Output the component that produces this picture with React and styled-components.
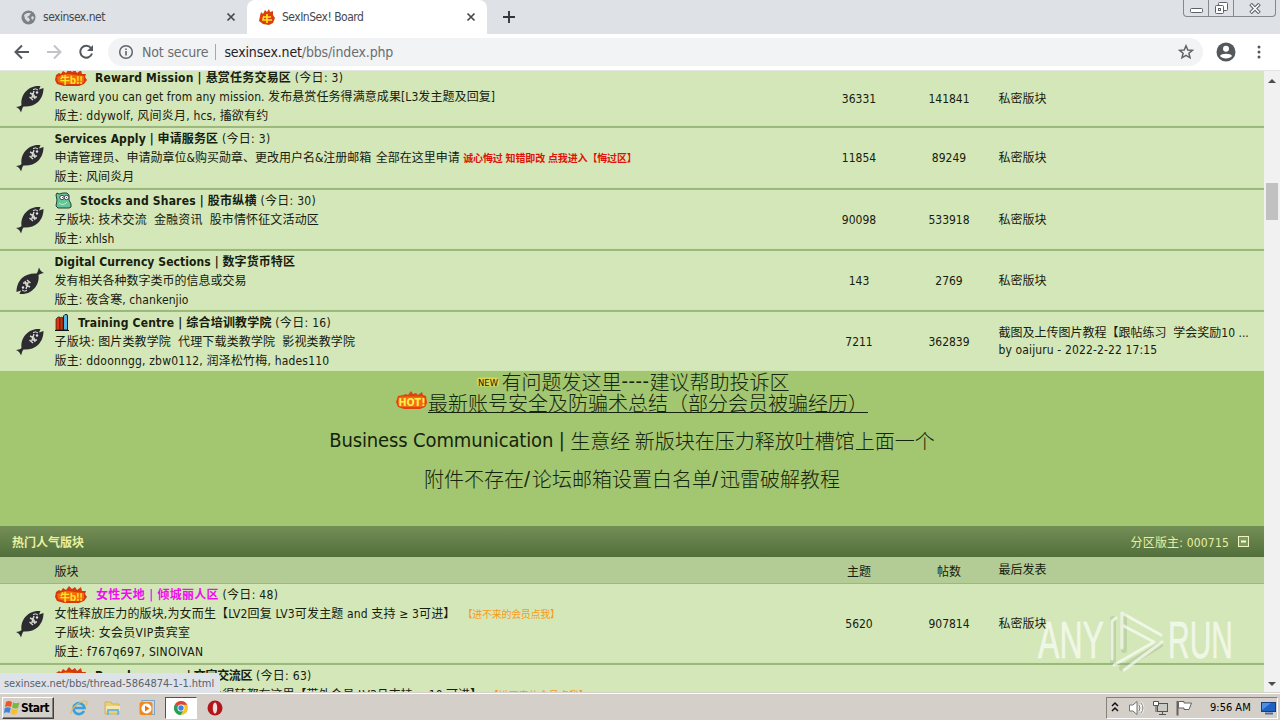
import React from "react";
import styled, { createGlobalStyle, css } from "styled-components";

const GlobalStyle = createGlobalStyle`
  * {
    box-sizing: border-box;
  }

  body {
    margin: 0;
    overflow: hidden;
    font-family: "DejaVu Sans Condensed", "DejaVu Sans", "Noto Sans CJK SC", sans-serif;
    font-stretch: condensed;
    font-size: 12px;
    color: #16200e;
  }

  svg {
    display: block;
    flex: none;
  }
`;

const Screen = styled.div`
  position: relative;
  display: flex;
  flex-direction: column;
  width: 1280px;
  height: 720px;
  overflow: hidden;
  background: white;
`;

/* browser frame */

const TabStrip = styled.div`
  display: flex;
  flex: none;
  height: 34px;
  background: #dee1e6;
`;

const Tab = styled.div`
  display: flex;
  align-items: center;
  width: ${(p) => p.$width}px;
  height: 34px;
  padding: 0 11px 0 ${(p) => p.$left}px;
  color: #45494d;
  border-radius: 8px 8px 0 0;
  background: ${(p) => (p.$active ? "white" : "transparent")};
`;

const TabTitle = styled.span`
  flex: 1;
  margin-left: 7px;
  font-size: 12px;
  letter-spacing: ${(p) => p.$ls || 0}px;
  white-space: nowrap;
`;

const NewTab = styled.div`
  display: flex;
  align-items: center;
  padding-left: 15px;
`;

const WindowButtons = styled.div`
  display: flex;
  height: 17px;
  margin-left: auto;
  margin-right: 4px;
  border: 1px solid #85888f;
  border-top: none;
  border-radius: 0 0 4px 4px;
`;

const WindowButton = styled.div`
  display: flex;
  justify-content: center;
  align-items: center;
  width: ${(p) => p.$width}px;

  & + & {
    border-left: 1px solid #85888f;
  }
`;

const Toolbar = styled.div`
  display: flex;
  align-items: center;
  flex: none;
  height: 37px;
  padding: 0 13px 1px 14px;
  border-bottom: 1px solid #e3e6e3;
  background: white;
`;

const NavButtons = styled.div`
  display: flex;
  gap: 16px;
  width: 94px;
`;

const AddressBar = styled.div`
  display: flex;
  align-items: center;
  flex: none;
  width: 1095px;
  height: 28px;
  padding: 0 9px 0 10px;
  border-radius: 14px;
  background: #f1f3f4;
  color: #6a6e72;
  font-size: 14px;
`;

const NotSecure = styled.span`
  margin-left: 8px;
  padding-right: 7px;
  border-right: 1px solid #a5a9ad;
  line-height: 16px;
  white-space: nowrap;
  letter-spacing: ${(p) => p.$ls}px;
`;

const Url = styled.span`
  flex: 1;
  margin-left: 8px;
  white-space: nowrap;
  letter-spacing: ${(p) => p.$ls}px;

  b {
    font-weight: normal;
    color: #1f2226;
  }
`;

const ToolbarRight = styled.div`
  display: flex;
  align-items: center;
  justify-content: space-between;
  flex: 1;
  margin-left: 13px;
`;

/* page */

const Viewport = styled.div`
  display: flex;
  flex: none;
  height: 621px;
`;

const Page = styled.main`
  width: 1264px;
  overflow: hidden;
  background: #a3c671;
`;

const Scrollbar = styled.div`
  display: flex;
  flex-direction: column;
  align-items: center;
  width: 16px;
  padding: 8px 0 6px;
  background: #f1f1f1;
`;

const Thumb = styled.div`
  width: 12px;
  height: 37px;
  margin: 100px 0 auto;
  background: #c1c1c1;
`;

const columns = css`
  display: grid;
  grid-template-columns: 54.5px 759.5px 90px 90px 1fr;
  align-items: center;
`;

const ForumRow = styled.div`
  ${columns}
  height: ${(p) => p.$height}px;
  padding-bottom: ${(p) => (p.$clipped ? 5 : 0)}px;
  border-bottom: ${(p) => (p.$last ? "none" : "2px solid #9cb97c")};
  background: #d4e7b9;
  box-shadow: inset 0 -1px #cfe6b4;
`;

const FishCell = styled.div`
  padding-left: 15px;

  svg {
    transform: ${(p) => (p.$old ? "rotate(180deg)" : "none")};
  }
`;

const Info = styled.div`
  align-self: ${(p) => (p.$clipped ? "start" : "center")};
  margin-top: ${(p) => (p.$clipped ? -2 : 0)}px;
  padding-top: ${(p) => (p.$clipped ? 0 : 1)}px;
`;

const Line = styled.div`
  display: flex;
  align-items: center;
  height: 19px;
  line-height: 19px;
  white-space: pre;
`;

const Run = styled.span`
  font-size: ${(p) => p.$size || 12}px;
  font-weight: ${(p) => (p.$bold ? "bold" : "normal")};
  color: ${(p) => p.$color || "inherit"};
  letter-spacing: ${(p) => p.$ls || 0}px;
`;

const BadgeBox = styled.span`
  width: ${(p) => p.$width}px;
  margin-top: -2px;
`;

const Count = styled.div`
  text-align: center;
`;

const LastPost = styled.div`
  padding: 1px 0 0 4.5px;
  line-height: 17px;
  white-space: pre;
`;

const Announcement = styled.div`
  display: flex;
  flex-direction: column;
  align-items: center;
  height: 155px;
  font-size: 20px;
  line-height: 21px;
  color: #15240c;
`;

const Notice = styled.div`
  display: flex;
  align-items: center;
  height: 21px;
  margin-bottom: ${(p) => p.$gap || 0}px;
  white-space: pre;
`;

const BigText = styled.span`
  font-family: "Noto Sans CJK SC Light", "Noto Sans CJK SC", sans-serif;
  font-weight: 300;
`;

const Underlined = styled(BigText)`
  height: 20px;
  line-height: 20px;
  border-bottom: 1px solid #15240c;
`;

const CategoryBar = styled.div`
  display: flex;
  align-items: center;
  justify-content: space-between;
  height: 31px;
  padding: 0 15px 0 12px;
  color: #e9f0a0;
  background: linear-gradient(#748f56, #526e3b);
`;

const Moderator = styled.span`
  display: flex;
  align-items: center;
  gap: 9px;
  letter-spacing: ${(p) => p.$ls || 0}px;
`;

const ColumnHeads = styled.div`
  ${columns}
  height: 27px;
  border-bottom: 1px solid #9cb97c;
  background: #b3cb95;
`;

const StatusBubble = styled.div`
  position: absolute;
  left: 0;
  top: 673px;
  width: 220px;
  height: 20px;
  padding: 1px 0 0 4px;
  border-top-right-radius: 4px;
  background: #dee3ea;
  color: #5c6166;
  font-size: 11px;
  line-height: 20px;
  letter-spacing: ${(p) => p.$ls}px;
  white-space: nowrap;
`;

const Watermark = styled.div`
  position: absolute;
  left: 1034px;
  top: 606px;
`;

/* taskbar */

const Taskbar = styled.div`
  display: flex;
  align-items: center;
  flex: none;
  height: 28px;
  padding: 2px 2px 0;
  border-top: 1px solid #d5d1cb;
  box-shadow: inset 0 1px #fff;
  background: #d5cfc9;
`;

const StartButton = styled.div`
  display: flex;
  align-items: center;
  gap: 1px;
  width: 52px;
  height: 22px;
  padding-left: 1px;
  border: 1px solid;
  border-color: #fff #404040 #404040 #fff;
  box-shadow: inset -1px -1px #85807a;
  font-size: 12px;
  line-height: 18px;
  font-weight: bold;
  color: #000;
  letter-spacing: ${(p) => p.$ls}px;
`;

const TaskIcon = styled.div`
  display: flex;
  align-items: center;
  justify-content: center;
  width: 32px;
  height: 22px;
  margin-left: 2px;
  border: 1px solid transparent;
  ${(p) =>
    p.$active &&
    css`
      border-color: #55524e #fff #fff #55524e;
      background: white;
    `}
`;

const QuickLaunch = styled.div`
  display: flex;
  margin-left: 7px;
`;

const Tray = styled.div`
  display: flex;
  align-items: center;
  width: 172px;
  height: 22px;
  margin-left: auto;
  padding-left: 4px;
  border: 1px solid;
  border-color: #85807a #fff #fff #85807a;
  color: #000;
`;

const TrayIcons = styled.div`
  display: flex;
  gap: 7px;
  margin-left: 9px;
`;

const Clock = styled.span`
  margin: 0 10px 0 17px;
  font-size: 11px;
  white-space: nowrap;
`;

function Fish() {
  return (
    <svg width="30" height="28" viewBox="0 0 30 28">
      <path
        d="M1 22 C3 21.500 5 21.500 6.500 20 C5.500 13 9 6.500 15 3 C18 1.300 22 .7 25.500 1 L24 4.500 L28.500 3 C28.500 8 27 13 23 17 C19 20.500 14 22 8.500 21.500 C7 23 7 25 6 27.500 C5 25 4 23 1 22 Z"
        fill="#2b2b30"
      />
      <path
        d="M15 8 L19 10 L20 14 M19 6 L17 12 L22 12 M14.500 12 L18 15"
        stroke="#d6dad2"
        strokeWidth="1.400"
        fill="none"
      />
      <path d="M18 4.500 Q21 3 23 5" stroke="#e4e4e4" strokeWidth="1" fill="none" />
      <circle cx="22" cy="7.500" r="1.200" fill="#e4e4e4" />
    </svg>
  );
}

function FlameBadge() {
  return (
    <svg width="32" height="18" viewBox="0 0 32 18">
      <path
        d="M1 6 L4 4 L6 5 L8 2 L11 4 L14 0 L17 3 L20 1 L22 4 L26 1 L27 5 L31 5 L30 8 L32 11 L29 15 L24 17 L9 17 L2 15 L0 11 Z"
        fill="#d63a0c"
      />
      <path d="M2 8 L7 6 L13 5 L20 6 L29 7 L29 13 L23 15 L9 15 L3 13 Z" fill="#f4690a" />
      <text
        x="5"
        y="14.500"
        fontSize="10"
        fontWeight="bold"
        fill="#ffe626"
        fontFamily="Noto Sans CJK SC, sans-serif"
        textLength="23"
      >
        牛b!!
      </text>
    </svg>
  );
}

function MonsterIcon() {
  return (
    <svg width="17" height="17" viewBox="0 0 17 17">
      <path
        d="M1 3 L2 1 L4 2 L8 1 L12 1 L14 3 L14 8 L16 12 L16 15 L14 16 L3 16 L1 14 L2 8 Z"
        fill="#67c698"
        stroke="#1f4436"
      />
      <circle cx="7" cy="5.500" r="2.200" fill="#fff" stroke="#223" strokeWidth=".8" />
      <circle cx="11.500" cy="5.500" r="2.200" fill="#fff" stroke="#223" strokeWidth=".8" />
      <path d="M7 5.500h1M11 5.500h1" stroke="#c22" strokeWidth="1.200" />
      <path d="M4 11 C6 13 10 13 12 10" stroke="#b7f0d2" fill="none" />
    </svg>
  );
}

function BooksIcon() {
  return (
    <svg width="14" height="17" viewBox="0 0 14 17">
      <path d="M1 5 L3 3 L5 3 L5 16 L1 16 Z" fill="#e0330f" stroke="#221" strokeWidth=".7" />
      <path d="M5 4 L7 3 L8 4 L8 16 L5 16 Z" fill="#d92c0c" stroke="#221" strokeWidth=".7" />
      <path d="M8.500 2 L10 .5 L12 .5 L12.500 2 L12.500 16 L8.500 16 Z" fill="#55b4e6" stroke="#123" />
      <path d="M0 16.500 H14" stroke="#111" />
    </svg>
  );
}

function HotBadge() {
  return (
    <svg width="32" height="24" viewBox="0 0 32 24">
      <path
        d="M2 5 L7 4 L10 3 L12 4 L15 0 L17 3 L20 2 L22 4 L26 1 L27 4 L30 5 L31 12 L29 16 L24 18 L8 18 L2 16 L0 11 Z"
        fill="#dc4412"
      />
      <rect x="2" y="5.500" width="27" height="10.500" rx="4" fill="#f36c14" />
      <text
        x="2.500"
        y="15"
        fontSize="11"
        fontWeight="bold"
        fill="#fff04a"
        fontFamily="DejaVu Sans, sans-serif"
        textLength="27"
        lengthAdjust="spacingAndGlyphs"
      >
        HOT!
      </text>
    </svg>
  );
}

function NewBadge() {
  return (
    <svg width="27" height="11" viewBox="0 0 27 11">
      <rect x="2" y="1.500" width="22" height="9" rx="3" fill="#d9d650" />
      <text
        x="3"
        y="9.500"
        fontSize="9"
        fill="#241c04"
        fontFamily="DejaVu Sans, sans-serif"
        textLength="20"
        lengthAdjust="spacingAndGlyphs"
      >
        NEW
      </text>
    </svg>
  );
}

function CloseX() {
  return (
    <svg width="10" height="10" viewBox="0 0 10 10">
      <path d="M1.500 1.500 L8.500 8.500 M8.500 1.500 L1.500 8.500" stroke="#45494d" strokeWidth="1.700" />
    </svg>
  );
}

function Forum({ height, clipped, old, isLast, lines, topics, posts, last }) {
  return (
    <ForumRow $height={height} $clipped={clipped} $last={isLast}>
      <FishCell $old={old}>
        <Fish />
      </FishCell>
      <Info $clipped={clipped}>
        {lines.map((line, i) => (
          <Line key={i}>
            {line.icon && <BadgeBox $width={line.iconWidth}>{line.icon}</BadgeBox>}
            {line.runs.map(([text, style], j) => (
              <Run
                key={j}
                $bold={style?.bold}
                $ls={style?.ls}
                $size={style?.size}
                $color={style?.color}
              >
                {text}
              </Run>
            ))}
          </Line>
        ))}
      </Info>
      <Count>{topics}</Count>
      <Count>{posts}</Count>
      <LastPost>
        {last &&
          last.map((text, i) => (
            <Run as="div" key={i} $ls={i ? 0.13 : 0}>
              {text}
            </Run>
          ))}
      </LastPost>
    </ForumRow>
  );
}

const today = (count) => [` (今日: ${count})`, { ls: 0.3 }];
const PRIVATE = ["私密版块"];

const forums = [
  {
    height: 57,
    clipped: true,
    lines: [
      {
        icon: <FlameBadge />,
        iconWidth: 40.5,
        runs: [["Reward Mission | 悬赏任务交易区", { bold: true, ls: 0.2 }], today(3)],
      },
      {
        runs: [
          [
            "Reward you can get from any mission. 发布悬赏任务得满意成果[L3发主题及回复]",
            { ls: 0.08 },
          ],
        ],
      },
      { runs: [["版主: ddywolf, 风间炎月, hcs, 搐欲有约", { ls: 0.2 }]] },
    ],
    topics: "36331",
    posts: "141841",
    last: PRIVATE,
  },
  {
    height: 62,
    lines: [
      { runs: [["Services Apply | 申请服务区", { bold: true, ls: 0.12 }], today(3)] },
      {
        runs: [
          ["申请管理员、申请勋章位&购买勋章、更改用户名&注册邮箱"],
          [" ", { ls: 1 }],
          ["全部在这里申请 "],
          ["诚心悔过 知错即改 点我进入【悔过区】", { size: 10, color: "#e01208", bold: true, ls: -0.15 }],
        ],
      },
      { runs: [["版主: 风间炎月", { ls: 0.1 }]] },
    ],
    topics: "11854",
    posts: "89249",
    last: PRIVATE,
  },
  {
    height: 61,
    lines: [
      {
        icon: <MonsterIcon />,
        iconWidth: 25.5,
        runs: [["Stocks and Shares | 股市纵横", { bold: true, ls: 0.2 }], today(30)],
      },
      { runs: [["子版块: 技术交流  金融资讯  股市情怀征文活动区", { ls: 0.14 }]] },
      { runs: [["版主: xhlsh"]] },
    ],
    topics: "90098",
    posts: "533918",
    last: PRIVATE,
  },
  {
    height: 61,
    old: true,
    lines: [
      { runs: [["Digital Currency Sections | 数字货币特区", { bold: true, ls: 0.08 }]] },
      { runs: [["发有相关各种数字类币的信息或交易"]] },
      { runs: [["版主: 夜含寒, chankenjio", { ls: 0.1 }]] },
    ],
    topics: "143",
    posts: "2769",
    last: PRIVATE,
  },
  {
    height: 59,
    isLast: true,
    lines: [
      {
        icon: <BooksIcon />,
        iconWidth: 23.5,
        runs: [["Training Centre | 综合培训教学院", { bold: true, ls: 0.18 }], today(16)],
      },
      { runs: [["子版块: 图片类教学院  代理下载类教学院  影视类教学院", { ls: 0.13 }]] },
      { runs: [["版主: ddoonngg, zbw0112, 润泽松竹梅, hades110", { ls: 0.18 }]] },
    ],
    topics: "7211",
    posts: "362839",
    last: ["截图及上传图片教程【跟帖练习  学会奖励10 ...", "by oaijuru - 2022-2-22 17:15"],
  },
];

const hotForums = [
  {
    height: 81,
    lines: [
      {
        icon: <FlameBadge />,
        iconWidth: 41.5,
        runs: [["女性天地 | 倾城丽人区", { bold: true, color: "#f00cf0", ls: 0.28 }], today(48)],
      },
      {
        runs: [
          [
            "女性释放压力的版块,为女而生【LV2回复 LV3可发主题 and 支持 ≥ 3可进】  ",
            { ls: 0.15 },
          ],
          ["【进不来的会员点我】", { size: 10, color: "#f79a1c", ls: -0.3 }],
        ],
      },
      { runs: [["子版块: 女会员VIP贵宾室", { ls: 0.25 }]] },
      { runs: [["版主: f767q697, SINOIVAN", { ls: 0.33 }]] },
    ],
    topics: "5620",
    posts: "907814",
    last: PRIVATE,
  },
  {
    height: 81,
    lines: [
      {
        icon: <FlameBadge />,
        iconWidth: 40.5,
        runs: [["Pseudonymous | 文字交流区", { bold: true, ls: -0.3 }], today(63)],
      },
      {
        runs: [
          ["各种文字原创交流转帖心得体会得转都有这里【带外会员 LV3且支持 ≥ 10 可进】  "],
          ["【进不来的会员点我】", { size: 10, color: "#f79a1c" }],
        ],
      },
      { runs: [["子版块:"]] },
      { runs: [["版主:"]] },
    ],
  },
];

function BrowserFrame() {
  return (
    <>
      <TabStrip>
        <Tab $width={247} $left={21}>
          <svg width="15" height="15" viewBox="0 0 15 15">
            <circle cx="7.500" cy="7.500" r="7" fill="#7d8186" />
            <path
              d="M3 5 L6 3 L10 3 L8 6 L6 7 L8 8 L9 10 L7 12 L4 9 Z M11 6 L13 7 L12 10 L10 8 Z"
              fill="#d9dce1"
            />
          </svg>
          <TabTitle $ls={-0.5}>sexinsex.net</TabTitle>
          <CloseX />
        </Tab>
        <Tab $width={240} $left={12} $active>
          <svg width="16" height="16" viewBox="0 0 16 16">
            <path
              d="M1 7 L2 3 L4 5 L6 1 L8 3 L10 0 L11 3 L14 2 L14 6 L16 9 L14 14 L10 16 L4 15 L0 12 Z"
              fill="#d9400f"
            />
            <path d="M5 7 L4 10 M4 8 H12 M3 11 H13 M8 5 V14" stroke="#ffe21f" strokeWidth="1.700" />
          </svg>
          <TabTitle $ls={-0.5}>SexInSex! Board</TabTitle>
          <CloseX />
        </Tab>
        <NewTab>
          <svg width="14" height="14" viewBox="0 0 14 14">
            <path d="M7 1 V13 M1 7 H13" stroke="#33363b" strokeWidth="1.900" />
          </svg>
        </NewTab>
        <WindowButtons>
          <WindowButton $width={24}>
            <svg width="13" height="14" viewBox="0 0 13 14">
              <rect x=".5" y="7.500" width="12" height="4" rx="1" fill="#fff" stroke="#5d6168" />
            </svg>
          </WindowButton>
          <WindowButton $width={25}>
            <svg width="13" height="14" viewBox="0 0 13 14">
              <rect x="3.500" y="1.500" width="9" height="8" rx="1" fill="#fff" stroke="#5d6168" />
              <rect x=".5" y="4.500" width="8" height="8" rx="1" fill="#fff" stroke="#5d6168" />
              <rect x="3.500" y="7.500" width="2" height="2" fill="#fff" stroke="#5d6168" />
            </svg>
          </WindowButton>
          <WindowButton $width={42}>
            <svg width="12" height="11" viewBox="0 0 12 11">
              <path d="M1.500 1 L10.500 10 M10.500 1 L1.500 10" stroke="#5d6168" strokeWidth="3.600" />
              <path d="M2 1.500 L10 9.500 M10 1.500 L2 9.500" stroke="#fff" strokeWidth="1.600" />
            </svg>
          </WindowButton>
        </WindowButtons>
      </TabStrip>
      <Toolbar>
        <NavButtons>
          <svg width="16" height="16" viewBox="0 0 16 16">
            <path d="M15 8 H2 M8 1.500 L1.500 8 L8 14.500" fill="none" stroke="#55595e" strokeWidth="2" />
          </svg>
          <svg width="16" height="16" viewBox="0 0 16 16">
            <path d="M1 8 H14 M8 1.500 L14.500 8 L8 14.500" fill="none" stroke="#c2c4c7" strokeWidth="2" />
          </svg>
          <svg width="16" height="16" viewBox="0 0 16 16">
            <path
              d="M13 4 A6 6 0 1 0 14 9.500"
              fill="none"
              stroke="#55595e"
              strokeWidth="2"
            />
            <path d="M15 1 V7 H9 Z" fill="#55595e" />
          </svg>
        </NavButtons>
        <AddressBar>
          <svg width="16" height="16" viewBox="0 0 16 16">
            <circle cx="8" cy="8" r="6.300" fill="none" stroke="#5f6368" strokeWidth="1.500" />
            <path d="M8 7 V11.500 M8 4.500 V6" stroke="#5f6368" strokeWidth="1.600" />
          </svg>
          <NotSecure $ls={-0.15}>Not secure</NotSecure>
          <Url $ls={-0.15}>
            <b>sexinsex.net</b>/bbs/index.php
          </Url>
          <svg width="16" height="16" viewBox="0 0 16 16">
            <path
              d="M8 1.800 L9.800 6 L14.400 6.300 L10.900 9.300 L12 13.800 L8 11.400 L4 13.800 L5.100 9.300 L1.600 6.300 L6.200 6 Z"
              fill="none"
              stroke="#5f6368"
              strokeWidth="1.500"
            />
          </svg>
        </AddressBar>
        <ToolbarRight>
          <svg width="20" height="20" viewBox="0 0 20 20">
            <circle cx="10" cy="10" r="9.500" fill="#54585d" />
            <circle cx="10" cy="6.800" r="3" fill="#fff" />
            <path d="M4 14 C5 11 15 11 16 14 C14 17.300 6 17.300 4 14 Z" fill="#fff" />
          </svg>
          <svg width="16" height="16" viewBox="0 0 16 16">
            <circle cx="8" cy="3" r="1.500" fill="#54585d" />
            <circle cx="8" cy="8" r="1.500" fill="#54585d" />
            <circle cx="8" cy="13" r="1.500" fill="#54585d" />
          </svg>
        </ToolbarRight>
      </Toolbar>
    </>
  );
}

function AnyRunMark() {
  return (
    <svg width="204" height="72" viewBox="0 0 204 72">
      <g
        fill="#fff"
        fillOpacity=".65"
        stroke="#fff"
        strokeOpacity=".4"
        fontFamily="Liberation Sans Narrow, Liberation Sans, sans-serif"
        fontSize="51"
      >
        <text x="4" y="52" textLength="66" lengthAdjust="spacingAndGlyphs">
          ANY
        </text>
        <text x="134" y="52" textLength="65" lengthAdjust="spacingAndGlyphs">
          RUN
        </text>
      </g>
      <g fill="none" strokeLinejoin="round" strokeLinecap="round">
        <path
          d="M88 62 L126 39 M79 55 V13 M90 44 V10"
          stroke="#8fa878"
          strokeOpacity=".3"
          strokeWidth="6"
        />
        <path
          d="M88 42 V7 L127 29 M82 12 L78 15 V53 M88 19 L120 36 L80 59 M128 36 L90 64"
          stroke="#fff"
          strokeOpacity=".65"
          strokeWidth="3"
        />
      </g>
    </svg>
  );
}

function WindowsTaskbar() {
  return (
    <Taskbar>
      <StartButton $ls={-0.6}>
        <svg width="16" height="15" viewBox="0 0 16 15">
          <path d="M2 2 C4 .5 6 1 8 2 L7 7 C5 6 3 6 1 7 Z" fill="#e8562a" />
          <path d="M9 2.500 C11 3.500 13 3.500 15.500 2.500 L14 8 C12 9 10 8.500 8 7.500 Z" fill="#7ab842" />
          <path d="M.8 8 C3 7 5 7 6.800 8 L5.500 13 C4 12 2 12 0 13 Z" fill="#3d85d8" />
          <path d="M7.800 8.500 C10 9.500 12 10 14 9 L12.500 14 C10 15 8 14.500 6.500 13.500 Z" fill="#f5c02c" />
        </svg>
        Start
      </StartButton>
      <QuickLaunch>
        <TaskIcon>
          <svg width="18" height="18" viewBox="0 0 18 18">
            <path
              d="M14 12 A5.500 5.500 0 1 1 14.500 9 H5"
              fill="none"
              stroke="#3aa0dc"
              strokeWidth="2.600"
            />
            <path d="M1 15 C0 10 9 2 16 2 C18 3 17 5 16 6" fill="none" stroke="#e8c04a" strokeWidth="1.200" />
          </svg>
        </TaskIcon>
        <TaskIcon>
          <svg width="18" height="18" viewBox="0 0 18 18">
            <path d="M1 3 H7 L8 5 H15 V15 H1 Z" fill="#ecd078" stroke="#c8a84c" strokeWidth=".7" />
            <path d="M2 7 H16 V12 H2 Z" fill="#f7e8a9" />
            <path d="M4 16 V11 H14 V16" fill="none" stroke="#73b7dc" strokeWidth="2" />
          </svg>
        </TaskIcon>
        <TaskIcon>
          <svg width="16" height="16" viewBox="0 0 16 16">
            <rect x="3" y=".5" width="12.500" height="14" fill="#c3dbee" stroke="#7fa5c6" />
            <rect x=".5" y="2" width="13" height="13" rx="2" fill="#f08a1c" />
            <circle cx="7.500" cy="8.500" r="5" fill="#fff" />
            <path d="M6 5.500 L10.500 8.500 L6 11.500 Z" fill="#e8740c" />
          </svg>
        </TaskIcon>
        <TaskIcon $active>
          <svg width="16" height="16" viewBox="0 0 16 16">
            <circle cx="8" cy="8" r="7" fill="#f4c622" />
            <path d="M8 8 L1.900 4.500 A7 7 0 0 1 14.200 4.700 L8 4.700 Z" fill="#dc4437" />
            <path d="M8 8 L1.900 4.500 A7 7 0 0 0 7.500 15 L11 9.700 Z" fill="#21a05a" />
            <circle cx="8" cy="8" r="3.500" fill="#fff" />
            <circle cx="8" cy="8" r="2.700" fill="#4280e8" />
          </svg>
        </TaskIcon>
        <TaskIcon>
          <svg width="16" height="16" viewBox="0 0 16 16">
            <circle cx="8" cy="8" r="7.500" fill="#b3161a" />
            <ellipse cx="8" cy="8" rx="2.200" ry="5.500" fill="#f4dcdc" />
          </svg>
        </TaskIcon>
      </QuickLaunch>
      <Tray>
        <svg width="8" height="16" viewBox="0 0 8 16">
          <path d="M1 6 L4 3 L7 6 M1 11 L4 8 L7 11" fill="none" stroke="#111" strokeWidth="1.500" />
        </svg>
        <TrayIcons>
          <svg width="17" height="16" viewBox="0 0 17 16">
            <g fill="none" stroke="#77746f">
              <path d="M9 1.500 V14.500 L5 11 H1.500 V5 H5 Z" fill="#fff" />
              <path d="M11 5 Q13 8 11 11 M13 3 Q17 8 13 13" stroke="#fff" strokeWidth="2.500" />
              <path d="M11 5 Q13 8 11 11 M13 3 Q17 8 13 13" />
            </g>
          </svg>
          <svg width="17" height="16" viewBox="0 0 17 16">
            <g fill="#fff" stroke="#55524f">
              <rect x="5.500" y="3.500" width="10" height="8" fill="#c9c9c6" />
              <path d="M7 14.500 H14 M10.500 12 V14" />
              <path d="M1.500 1.500 H6.500 V5.500 H1.500 Z M4 6 V12" />
            </g>
          </svg>
          <svg width="17" height="16" viewBox="0 0 17 16">
            <g fill="#fff" stroke="#66635f">
              <path d="M1.500 1 V15.500" strokeWidth="2" />
              <path d="M2.500 1.500 H8 V3 H15.500 L13 9.500 H8 V8 H2.500 Z" />
            </g>
          </svg>
        </TrayIcons>
        <Clock>9:56 AM</Clock>
        <svg width="15" height="14" viewBox="0 0 15 14">
          <rect x=".5" y="1.500" width="14" height="9" fill="#2062c4" stroke="#153d80" />
          <path d="M1 9 L10 2 H1 Z" fill="#4b90e2" />
          <path d="M4 12.500 H12" stroke="#4e6f9e" strokeWidth="2" />
        </svg>
      </Tray>
    </Taskbar>
  );
}

function App() {
  return (
    <Screen>
      <GlobalStyle />
      <BrowserFrame />
      <Viewport>
        <Page>
          {forums.map((forum, i) => (
            <Forum key={i} {...forum} />
          ))}
          <Announcement>
            <Notice>
              <NewBadge />
              <BigText>有问题发这里</BigText>
              <Run $size={20} $ls={0.5}>
                ----
              </Run>
              <BigText>建议帮助投诉区</BigText>
            </Notice>
            <Notice $gap={17}>
              <HotBadge />
              <Underlined>最新账号安全及防骗术总结（部分会员被骗经历）</Underlined>
            </Notice>
            <Notice $gap={17}>
              <Run $size={20} $ls={-0.13}>
                {"Business Communication | "}
              </Run>
              <BigText>生意经 新版块在压力释放吐槽馆上面一个</BigText>
            </Notice>
            <Notice>
              <BigText>附件不存在</BigText>
              <Run $size={20} $ls={2}>
                /
              </Run>
              <BigText>论坛邮箱设置白名单</BigText>
              <Run $size={20} $ls={2}>
                /
              </Run>
              <BigText>迅雷破解教程</BigText>
            </Notice>
          </Announcement>
          <CategoryBar>
            <Run $bold>热门人气版块</Run>
            <Moderator $ls={0.18}>
              分区版主: 000715
              <svg width="11" height="11" viewBox="0 0 11 11">
                <rect x=".5" y=".5" width="10" height="10" fill="#7d9a5e" stroke="#eef5c0" />
                <path d="M3 5.500 H8" stroke="#fbffd8" strokeWidth="2" />
              </svg>
            </Moderator>
          </CategoryBar>
          <ColumnHeads>
            <span />
            <span>版块</span>
            <Count>主题</Count>
            <Count>帖数</Count>
            <LastPost>最后发表</LastPost>
          </ColumnHeads>
          {hotForums.map((forum, i) => (
            <Forum key={i} {...forum} />
          ))}
        </Page>
        <Scrollbar>
          <svg width="8" height="4" viewBox="0 0 8 4">
            <path d="M4 0 L8 4 H0 Z" fill="#4d4d4d" />
          </svg>
          <Thumb />
          <svg width="8" height="4" viewBox="0 0 8 4">
            <path d="M0 0 H8 L4 4 Z" fill="#4d4d4d" />
          </svg>
        </Scrollbar>
      </Viewport>
      <WindowsTaskbar />
      <StatusBubble $ls={-0.05}>sexinsex.net/bbs/thread-5864874-1-1.html</StatusBubble>
      <Watermark>
        <AnyRunMark />
      </Watermark>
    </Screen>
  );
}

export default App;
